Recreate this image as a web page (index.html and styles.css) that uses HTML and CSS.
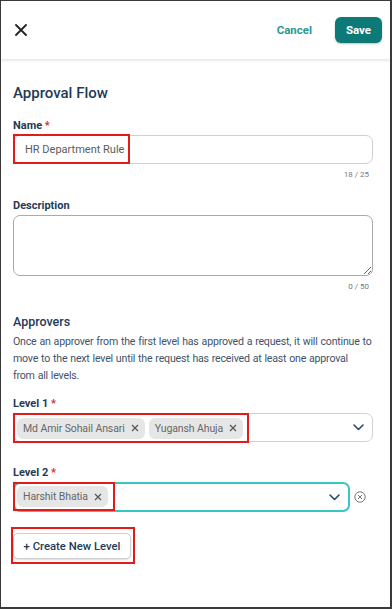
FILE: index.html
```html
<!DOCTYPE html>
<html lang="en">
<head>
  <meta charset="UTF-8">
  <title>Approval Flow</title>
  <link rel="stylesheet" href="styles.css">
</head>
<body>
  <div class="frame">
    <header class="topbar">
      <button class="close-btn" aria-label="Close">
        <svg width="12" height="12" viewBox="0 0 12 12"><path d="M1 1L11 11M11 1L1 11" stroke="#222" stroke-width="1.8" stroke-linecap="round"/></svg>
      </button>
      <div class="actions">
        <button class="cancel-btn">Cancel</button>
        <button class="save-btn">Save</button>
      </div>
    </header>

    <main class="content">
      <h1>Approval Flow</h1>

      <label class="label name-label">Name <span class="req">*</span></label>
      <div class="input">
        <span class="mark mark-name">HR Department Rule</span>
      </div>
      <div class="counter">18 / 25</div>

      <label class="label desc-label">Description</label>
      <textarea class="textarea"></textarea>
      <div class="counter">0 / 50</div>

      <h2>Approvers</h2>
      <p class="help">Once an approver from the first level has approved a request, it will continue to move to the next level until the request has received at least one approval <span class="nowrap">from all levels.</span></p>

      <label class="label level-label">Level 1 <span class="req">*</span></label>
      <div class="level-row">
        <div class="select">
          <div class="mark chips">
            <span class="chip">Md Amir Sohail Ansari <svg class="chip-x" width="8" height="8" viewBox="0 0 8 8"><path d="M1 1L7 7M7 1L1 7" stroke="#555" stroke-width="1.2"/></svg></span>
            <span class="chip">Yugansh Ahuja <svg class="chip-x" width="8" height="8" viewBox="0 0 8 8"><path d="M1 1L7 7M7 1L1 7" stroke="#555" stroke-width="1.2"/></svg></span>
          </div>
          <svg class="chevron" width="11" height="7" viewBox="0 0 11 7"><path d="M1 1L5.5 5.5L10 1" fill="none" stroke="#2c4a66" stroke-width="1.6" stroke-linecap="round" stroke-linejoin="round"/></svg>
        </div>
      </div>

      <label class="label level-label level-two">Level 2 <span class="req">*</span></label>
      <div class="level-row">
        <div class="select active">
          <div class="mark chips">
            <span class="chip">Harshit Bhatia <svg class="chip-x" width="8" height="8" viewBox="0 0 8 8"><path d="M1 1L7 7M7 1L1 7" stroke="#555" stroke-width="1.2"/></svg></span>
          </div>
          <svg class="chevron" width="11" height="7" viewBox="0 0 11 7"><path d="M1 1L5.5 5.5L10 1" fill="none" stroke="#2c4a66" stroke-width="1.6" stroke-linecap="round" stroke-linejoin="round"/></svg>
        </div>
        <svg class="remove" width="12" height="12" viewBox="0 0 12 12"><circle cx="6" cy="6" r="5.2" fill="none" stroke="#777" stroke-width="1"/><path d="M4 4L8 8M8 4L4 8" stroke="#777" stroke-width="1"/></svg>
      </div>

      <span class="mark mark-btn">
        <button class="create-btn">+ Create New Level</button>
      </span>
    </main>
  </div>
</body>
</html>
```

FILE: styles.css
```css
* {
  box-sizing: border-box;
}

body {
  margin: 0;
  font-family: Roboto, "Liberation Sans", sans-serif;
  background: #fff;
  color: #1f3b57;
}

.frame {
  width: 392px;
  height: 609px;
  border: 1px solid #3a3a3a;
  border-right-width: 2px;
  border-bottom-width: 2px;
  overflow: hidden;
}

.topbar {
  height: 58px;
  display: flex;
  align-items: center;
  justify-content: space-between;
  padding: 0 8px 0 14px;
  box-shadow: 0 2px 2px rgba(0, 0, 0, 0.09);
  position: relative;
}

button {
  font-family: inherit;
  cursor: pointer;
}

.close-btn {
  border: 0;
  background: none;
  padding: 0;
  width: 12px;
  height: 12px;
  display: flex;
}

.actions {
  display: flex;
  align-items: center;
  gap: 23px;
}

.cancel-btn {
  border: 0;
  background: none;
  padding: 0;
  color: #2a9893;
  font-size: 11.5px;
  font-weight: 700;
}

.save-btn {
  width: 47px;
  height: 26px;
  border: 0;
  border-radius: 6px;
  background: #0d7a77;
  color: #fff;
  font-size: 11.5px;
  font-weight: 700;
  box-shadow: 0 1px 2px rgba(0, 0, 0, 0.25);
}

.content {
  padding: 0 17px 0 12px;
  display: flex;
  flex-direction: column;
  align-items: flex-start;
}

h1 {
  margin: 25px 0 0;
  font-size: 15px;
  font-weight: 500;
  line-height: 18px;
  color: #1f3b57;
}

.label {
  display: block;
  margin-top: 15px;
  font-size: 11px;
  font-weight: 700;
  line-height: 14px;
  color: #1f3b57;
}

.name-label {
  margin-top: 17px;
}

.req {
  color: #d62b2b;
}

.input {
  width: 100%;
  height: 29px;
  margin-top: 2px;
  border: 1px solid #cfcfcf;
  border-radius: 7px;
  display: flex;
  align-items: stretch;
}

.mark {
  border: 2px solid #e21b1b;
}

.mark-name {
  margin: -2px 0 -1px -1px;
  padding: 0 4px 0 10px;
  display: flex;
  align-items: center;
  font-size: 11px;
  color: #5c5c5c;
}

.counter {
  align-self: flex-end;
  margin: 5px 4px 0 0;
  font-size: 8px;
  line-height: 12px;
  color: #777;
}

.desc-label {
  margin-top: 18px;
}

.textarea {
  width: 100%;
  height: 61px;
  margin-top: 2px;
  border: 1px solid #aaa;
  border-radius: 7px;
  resize: vertical;
  font-family: inherit;
}

h2 {
  margin: 21px 0 0;
  font-size: 12.5px;
  font-weight: 500;
  line-height: 16px;
  color: #1f3b57;
}

.help {
  margin: 3px 0 0;
  font-size: 10.6px;
  letter-spacing: -0.2px;
  word-spacing: 0.5px;
  line-height: 17px;
  color: #3e5368;
}

.nowrap {
  white-space: nowrap;
}

.level-label {
  margin-top: 13px;
}

.level-two {
  margin-top: 24px;
}

.level-row {
  width: 100%;
  margin-top: 2px;
  display: flex;
  align-items: center;
}

.select {
  flex: 1;
  height: 29px;
  border: 1px solid #d2d2d2;
  border-radius: 7px;
  display: flex;
  align-items: stretch;
  justify-content: space-between;
}

.select.active {
  flex: 0 0 337px;
  height: 30px;
  border: 2px solid #38c5c6;
}

.chips {
  margin: -1px 0 -2px -1px;
  padding: 2px 4px 2px 2px;
  display: flex;
  align-items: center;
  gap: 4px;
}

.active .chips {
  margin: -2px 0 -1px -2px;
  padding-right: 5px;
}

.chip {
  height: 21px;
  padding: 0 6px 0 6px;
  border-radius: 6px;
  background: #e6e6e6;
  display: flex;
  align-items: center;
  gap: 6px;
  font-size: 10.5px;
  letter-spacing: -0.1px;
  color: #666;
  white-space: nowrap;
}

.chip-x {
  flex: none;
}

.chevron {
  align-self: center;
  margin-right: 8px;
}

.remove {
  margin-left: 4px;
}

.mark-btn {
  margin: 15px 0 0 -2px;
  padding: 4px 2px 3px 0;
  display: inline-flex;
}

.create-btn {
  width: 118px;
  height: 26px;
  border: 1px solid #d0d0d0;
  border-radius: 5px;
  background: #fff;
  color: #1f3b57;
  font-size: 11.3px;
  font-weight: 500;
  box-shadow: 0 1px 2px rgba(0, 0, 0, 0.15);
}
```
